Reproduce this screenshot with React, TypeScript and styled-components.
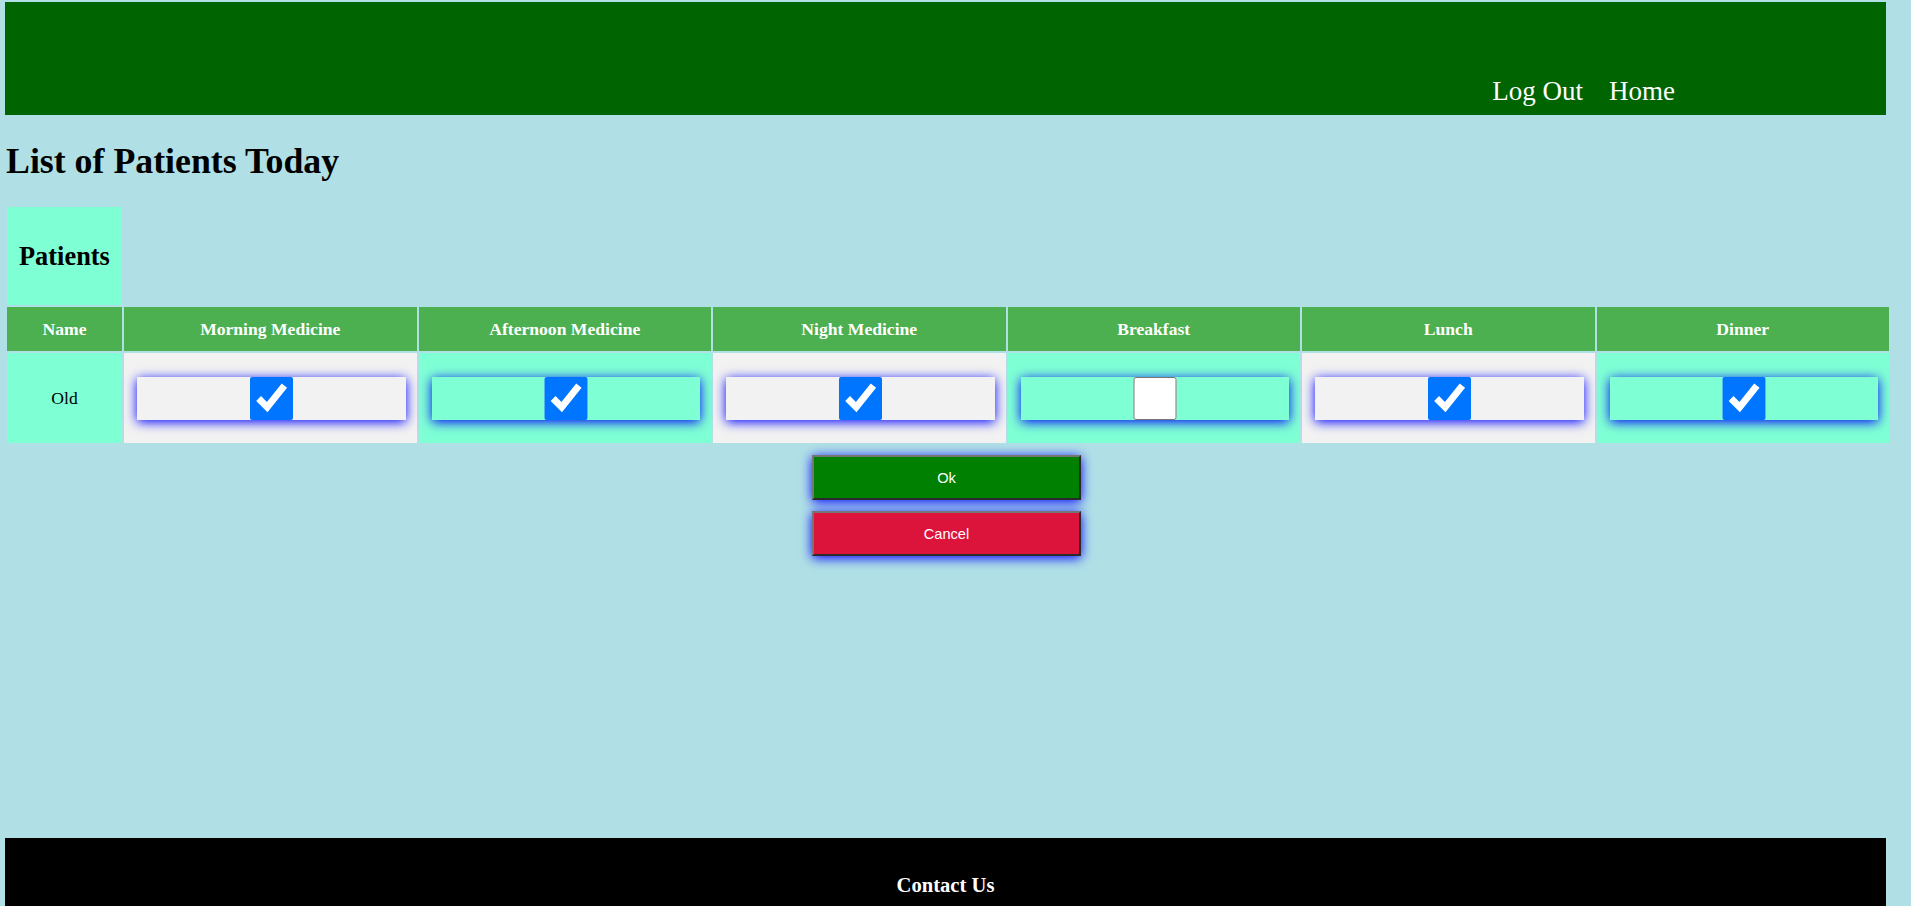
import React from "react";
import styled, { createGlobalStyle } from "styled-components";

type Patient = {
  name: string;
  checks: boolean[];
};

type ActionButtonProps = {
  $tone: "ok" | "cancel";
};

const columns: Array<string> = [
  "Morning Medicine",
  "Afternoon Medicine",
  "Night Medicine",
  "Breakfast",
  "Lunch",
  "Dinner",
];

const patients: Array<Patient> = [
  { name: "Old", checks: [true, true, true, false, true, true] },
];

const App = () => {
  return (
    <>
      <GlobalStyle />
      <TopBar>
        <NavLinks>
          <NavLink href="#">Log Out</NavLink>
          <NavLink href="#">Home</NavLink>
        </NavLinks>
      </TopBar>
      <Content>
        <Title>List of Patients Today</Title>
        <PatientTable>
          <colgroup>
            <col style={{ width: "115px" }} />
            {columns.map((c) => (
              <col key={c} />
            ))}
          </colgroup>
          <thead>
            <tr>
              <CaptionCell>
                <CaptionHeading>Patients</CaptionHeading>
              </CaptionCell>
            </tr>
            <tr>
              <HeadCell>Name</HeadCell>
              {columns.map((c) => (
                <HeadCell key={c}>{c}</HeadCell>
              ))}
            </tr>
          </thead>
          <tbody>
            {patients.map((p) => (
              <tr key={p.name}>
                <Cell>{p.name}</Cell>
                {p.checks.map((checked, i) => (
                  <Cell key={i}>
                    <CheckInput type="checkbox" defaultChecked={checked} />
                  </Cell>
                ))}
              </tr>
            ))}
          </tbody>
        </PatientTable>
        <Actions>
          <ActionButton $tone="ok">Ok</ActionButton>
          <ActionButton $tone="cancel">Cancel</ActionButton>
        </Actions>
      </Content>
      <Footer>
        <FooterHeading>Contact Us</FooterHeading>
      </Footer>
    </>
  );
};

const GlobalStyle = createGlobalStyle`
  html {
    background-color: #b0e0e6;
  }
  body {
    /* right margin leaves room where the scrollbar sat */
    margin: 2px 20px 0 5px;
    background-color: #b0e0e6;
    font-family: "Liberation Serif", "Times New Roman", serif;
    font-size: 17.6px;
  }
`;

const TopBar = styled.header`
  width: calc(100% - 5px);
  height: 113px;
  background-color: #006400;
  display: flex;
  justify-content: flex-end;
  align-items: flex-end;
  box-sizing: border-box;
  padding: 0 211px 8px 0;
`;

const NavLinks = styled.nav`
  display: flex;
  gap: 26px;
`;

const NavLink = styled.a`
  color: #ffffff;
  text-decoration: none;
  font-size: 27px;
  line-height: 31px;
`;

const Content = styled.main`
  min-height: 723px;
  box-sizing: border-box;
  padding-top: 26px;
`;

const Title = styled.h1`
  margin: 0 0 24px 1px;
  font-size: 35.8px;
  line-height: 40px;
  font-weight: bold;
  color: #000000;
`;

const PatientTable = styled.table`
  width: 100%;
  table-layout: fixed;
  border-spacing: 2px;
`;

const CaptionCell = styled.th`
  background-color: #7fffd4;
  padding: 12px;
  text-align: left;
`;

const CaptionHeading = styled.h2`
  margin: 22px 0;
  font-size: 26.4px;
  line-height: 30px;
  color: #000000;
`;

const HeadCell = styled.th`
  background-color: #4caf50;
  color: #ffffff;
  padding: 12px 4px;
  height: 20px;
  font-size: 17.6px;
  line-height: 20px;
  text-align: center;
`;

const Cell = styled.td`
  background-color: #7fffd4;
  padding: 12px;
  height: 66px;
  text-align: center;
  &:nth-child(even) {
    background-color: #f2f2f2;
  }
`;

const CheckInput = styled.input`
  display: block;
  width: 100%;
  height: 43px;
  margin: 0 0 0 1px;
  box-shadow: 0 2px 11px #0000ff;
`;

const Actions = styled.div`
  display: flex;
  flex-direction: column;
  align-items: center;
  gap: 11px;
  margin-top: 10px;
  padding-right: 3px;
`;

const ActionButton = styled.button<ActionButtonProps>`
  width: 269px;
  height: 45px;
  background-color: ${(props) => (props.$tone === "ok" ? "#008000" : "#dc143c")};
  color: #ffffff;
  font-family: "Liberation Sans", Arial, sans-serif;
  font-size: 14.6px;
  border-width: 2px;
  border-style: solid;
  border-color: #767676 #2b2b2b #2b2b2b #767676;
  box-shadow: 0 2px 11px #0000ff;
  cursor: pointer;
`;

const Footer = styled.footer`
  width: calc(100% - 5px);
  min-height: 260px;
  background-color: #000000;
  padding: 15px 0;
  box-sizing: border-box;
  text-align: center;
`;

const FooterHeading = styled.h3`
  margin: 20px 0;
  color: #ffffff;
  font-size: 20.6px;
  line-height: 24px;
`;

export default App;
